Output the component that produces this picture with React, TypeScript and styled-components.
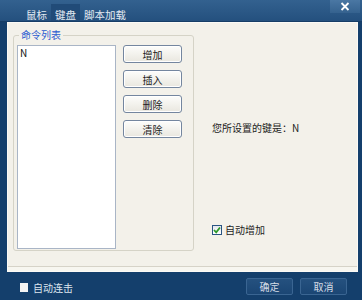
import { createGlobalStyle } from 'styled-components';
import styled from 'styled-components';

const GlobalStyle = createGlobalStyle`
  html, body {
    margin: 0;
    padding: 0;
    background: #143f6c;
  }
  body {
    font-family: 'Noto Sans CJK SC', 'Liberation Sans', sans-serif;
    font-size: 10px;
  }
`;

const tabs = ['鼠标', '键盘', '脚本加载'];
const actions = ['增加', '插入', '删除', '清除'];

const App = () => {
  return (
    <Window>
      <GlobalStyle />
      <TitleBar>
        <Tabs>
          {tabs.map((t) => (
            <Tab key={t} active={t === '键盘'}>
              {t}
            </Tab>
          ))}
        </Tabs>
        <CloseButton>
          <svg width='10' height='9' viewBox='0 0 10 9'>
            <path d='M1.5 1 L8.5 8 M8.5 1 L1.5 8' stroke='#ffffff' strokeWidth='1.8' />
          </svg>
        </CloseButton>
      </TitleBar>

      <Panel>
        <PanelBody>
          <GroupBox>
            <Legend>命令列表</Legend>
            <ListBox>N</ListBox>
            <ButtonColumn>
              {actions.map((a) => (
                <ActionButton key={a}>{a}</ActionButton>
              ))}
            </ButtonColumn>
          </GroupBox>
          <InfoColumn>
            <InfoText>您所设置的键是：N</InfoText>
            <CheckRow>
              <CheckBox>
                <svg width='8' height='8' viewBox='0 0 8 8'>
                  <path d='M1 4 L3.2 6.3 L7 1.5' fill='none' stroke='#2e9a2a' strokeWidth='1.8' />
                </svg>
              </CheckBox>
              自动增加
            </CheckRow>
          </InfoColumn>
        </PanelBody>
        <PanelEdge />
      </Panel>

      <Footer>
        <FooterCheck>
          <WhiteBox />
          自动连击
        </FooterCheck>
        <FooterButtons>
          <DarkButton>确定</DarkButton>
          <DarkButton>取消</DarkButton>
        </FooterButtons>
      </Footer>
    </Window>
  );
};

const Window = styled.div`
  width: 362px;
  height: 300px;
  display: flex;
  flex-direction: column;
  background: #143f6c;
  overflow: hidden;
`;

const TitleBar = styled.div`
  height: 22px;
  display: flex;
  justify-content: space-between;
  background: linear-gradient(#33618f, #24507e);
  border-bottom: 1px solid #163d66;
  box-sizing: border-box;
`;

const Tabs = styled.div`
  display: flex;
  padding-left: 22px;
  padding-top: 4px;
`;

const Tab = styled.div<{ active?: boolean }>`
  padding: 3px 4px 0;
  font-size: 10.5px;
  line-height: 15px;
  color: #e3eaf2;
  background: ${(p) => (p.active ? '#214b78' : 'transparent')};
`;

const CloseButton = styled.div`
  width: 30px;
  height: 13px;
  margin-right: 2px;
  display: flex;
  align-items: center;
  justify-content: center;
  background: linear-gradient(#4a77a3, #35628f);
`;

const Panel = styled.div`
  height: 250px;
  margin: 0 4px 0 7px;
  display: flex;
  flex-direction: column;
  background: #f3f1ea;
  border: 1px solid #fbfaf6;
  box-sizing: border-box;
`;

const PanelBody = styled.div`
  flex: 1;
  display: flex;
  padding: 12px 0 0 5px;
`;

const PanelEdge = styled.div`
  height: 4px;
  border-top: 1px solid #d6d3c8;
  background: #f7f6f0;
`;

const GroupBox = styled.div`
  position: relative;
  width: 181px;
  height: 216px;
  box-sizing: border-box;
  display: flex;
  gap: 7px;
  padding: 9px 0 0 3px;
  border: 1px solid #d5d3c7;
  border-radius: 3px;
`;

const Legend = styled.span`
  position: absolute;
  top: -7px;
  left: 5px;
  padding: 0 2px;
  line-height: 12px;
  color: #2a5bd0;
  background: #f3f1ea;
`;

const ListBox = styled.div`
  width: 99px;
  height: 204px;
  box-sizing: border-box;
  padding: 1px 2px;
  line-height: 12px;
  color: #111;
  background: #ffffff;
  border: 1px solid #a9b5c6;
`;

const ButtonColumn = styled.div`
  display: flex;
  flex-direction: column;
  gap: 7px;
`;

const ActionButton = styled.div`
  width: 59px;
  height: 18px;
  box-sizing: border-box;
  display: flex;
  align-items: center;
  justify-content: center;
  color: #1c1c1c;
  border: 1px solid #74869f;
  border-radius: 3px;
  background: linear-gradient(#fdfdfb, #e9e7df);
  box-shadow: inset 0 0 0 1px #ffffff;
`;

const InfoColumn = styled.div`
  display: flex;
  flex-direction: column;
  padding: 87px 0 0 18px;
`;

const InfoText = styled.div`
  line-height: 12px;
  color: #1c1c1c;
`;

const CheckRow = styled.div`
  margin-top: 90px;
  display: flex;
  align-items: center;
  gap: 3px;
  line-height: 12px;
  color: #1c1c1c;
`;

const CheckBox = styled.div`
  width: 10px;
  height: 10px;
  box-sizing: border-box;
  display: flex;
  align-items: center;
  justify-content: center;
  border: 1px solid #2a5583;
  background: linear-gradient(#e4e8ee, #ffffff);
`;

const Footer = styled.div`
  flex: 1;
  display: flex;
  align-items: center;
  justify-content: space-between;
  padding: 0 15px 0 20px;
`;

const FooterCheck = styled.div`
  display: flex;
  align-items: center;
  gap: 5px;
  margin-top: 3px;
  color: #dde5ee;
`;

const WhiteBox = styled.div`
  width: 8px;
  height: 9px;
  background: #f4f4f4;
`;

const FooterButtons = styled.div`
  display: flex;
  gap: 7px;
`;

const DarkButton = styled.div`
  width: 47px;
  height: 17px;
  box-sizing: border-box;
  display: flex;
  align-items: center;
  justify-content: center;
  color: #d5dce6;
  border: 1px solid #3a6592;
  border-radius: 2px;
  background: linear-gradient(#25517f, #1b4674);
`;

export default App;
